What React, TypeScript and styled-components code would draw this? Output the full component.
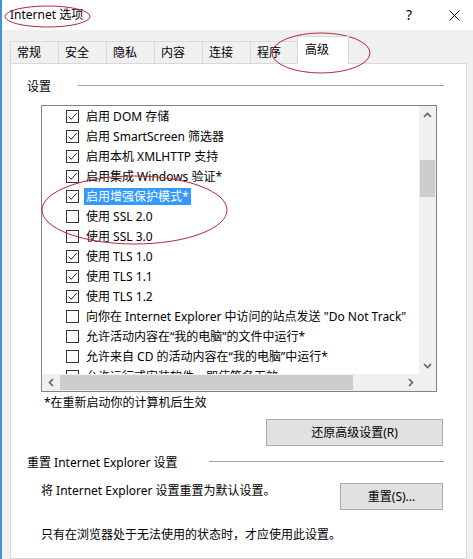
import React from 'react';
import styled, { createGlobalStyle } from 'styled-components';

interface OptionItem {
  label: string;
  checked: boolean;
  selected?: boolean;
}

const options: OptionItem[] = [
  { label: '启用 DOM 存储', checked: true },
  { label: '启用 SmartScreen 筛选器', checked: true },
  { label: '启用本机 XMLHTTP 支持', checked: true },
  { label: '启用集成 Windows 验证*', checked: true },
  { label: '启用增强保护模式*', checked: true, selected: true },
  { label: '使用 SSL 2.0', checked: false },
  { label: '使用 SSL 3.0', checked: false },
  { label: '使用 TLS 1.0', checked: true },
  { label: '使用 TLS 1.1', checked: true },
  { label: '使用 TLS 1.2', checked: true },
  { label: '向你在 Internet Explorer 中访问的站点发送 "Do Not Track"', checked: false },
  { label: '允许活动内容在“我的电脑”的文件中运行*', checked: false },
  { label: '允许来自 CD 的活动内容在“我的电脑”中运行*', checked: false },
  { label: '允许运行或安装软件，即使签名无效', checked: false },
];

const tabs = ['常规', '安全', '隐私', '内容', '连接', '程序', '高级'];

const GlobalStyle = createGlobalStyle`
  html, body {
    margin: 0;
    padding: 0;
    background: #ffffff;
  }
  body {
    font-family: "Noto Sans", "Noto Sans CJK SC", sans-serif;
    font-size: 12px;
    color: #000000;
  }
  * {
    box-sizing: border-box;
  }
`;

const App: React.FC = () => {
  return (
    <>
      <GlobalStyle />
      <Window>
        <TitleBar>
          <Title>Internet 选项</Title>
          <TitleButton $width={52}>
            <HelpGlyph>?</HelpGlyph>
          </TitleButton>
          <TitleButton $width={38}>
            <svg width="11" height="11" viewBox="0 0 11 11">
              <path d="M0.5 0.5 L10.5 10.5 M10.5 0.5 L0.5 10.5" stroke="#000" strokeWidth="1" fill="none" />
            </svg>
          </TitleButton>
        </TitleBar>

        <TabStrip>
          {tabs.map(tab => (
            <Tab key={tab} $active={tab === '高级'}>
              {tab}
            </Tab>
          ))}
        </TabStrip>

        <Panel>
          <GroupHeader>
            <GroupLabel>设置</GroupLabel>
            <GroupLine $offset={27} />
          </GroupHeader>

          <ListBox>
            <ListViewport>
              {options.map(opt => (
                <OptionRow key={opt.label}>
                  <CheckBox>
                    {opt.checked && (
                      <svg width="11" height="11" viewBox="0 0 11 11">
                        <path d="M1.5 5.5 L4.2 8.3 L9.6 2.2" stroke="#222" strokeWidth="1" fill="none" />
                      </svg>
                    )}
                  </CheckBox>
                  <OptionLabel $selected={opt.selected}>{opt.label}</OptionLabel>
                </OptionRow>
              ))}
            </ListViewport>

            <VScroll>
              <ArrowCell>
                <svg width="9" height="6" viewBox="0 0 9 6">
                  <path d="M1 5 L4.5 1.5 L8 5" stroke="#606060" strokeWidth="1.6" fill="none" />
                </svg>
              </ArrowCell>
              <Track>
                <VThumb />
              </Track>
              <ArrowCell>
                <svg width="9" height="6" viewBox="0 0 9 6">
                  <path d="M1 1 L4.5 4.5 L8 1" stroke="#606060" strokeWidth="1.6" fill="none" />
                </svg>
              </ArrowCell>
            </VScroll>

            <HScroll>
              <ArrowCell>
                <svg width="6" height="9" viewBox="0 0 6 9">
                  <path d="M5 1 L1.5 4.5 L5 8" stroke="#606060" strokeWidth="1.6" fill="none" />
                </svg>
              </ArrowCell>
              <Track>
                <HThumb />
              </Track>
              <ArrowCell>
                <svg width="6" height="9" viewBox="0 0 6 9">
                  <path d="M1 1 L4.5 4.5 L1 8" stroke="#606060" strokeWidth="1.6" fill="none" />
                </svg>
              </ArrowCell>
            </HScroll>

            <Corner />
          </ListBox>

          <Note>*在重新启动你的计算机后生效</Note>

          <RestoreButton>还原高级设置(R)</RestoreButton>

          <GroupHeader $top={9}>
            <GroupLabel>重置 Internet Explorer 设置</GroupLabel>
            <GroupLine $offset={31} />
          </GroupHeader>

          <ResetRow>
            <BodyText>将 Internet Explorer 设置重置为默认设置。</BodyText>
            <ResetButton>重置(S)...</ResetButton>
          </ResetRow>

          <Hint>只有在浏览器处于无法使用的状态时，才应使用此设置。</Hint>
        </Panel>

        <Annotations width="473" height="559" viewBox="0 0 473 559">
          <ellipse cx="47.5" cy="16.5" rx="42.5" ry="10.5" />
          <ellipse cx="321" cy="53" rx="49" ry="20" />
          <ellipse cx="134.5" cy="210" rx="92.5" ry="34" />
        </Annotations>
      </Window>
    </>
  );
};

const Window = styled.div`
  position: relative;
  width: 473px;
  height: 559px;
  overflow: hidden;
  background: #f0f0f0;
  border-left: 2px solid #3d95d6;
  display: flex;
  flex-direction: column;
`;

const TitleBar = styled.div`
  flex: none;
  height: 30px;
  background: #ffffff;
  display: flex;
  align-items: center;
  padding-left: 8px;
`;

const Title = styled.span`
  flex: 1;
  line-height: 16px;
`;

const TitleButton = styled.div<{ $width: number }>`
  width: ${p => p.$width}px;
  height: 30px;
  display: flex;
  align-items: center;
  justify-content: center;
`;

const HelpGlyph = styled.span`
  font-size: 14px;
  line-height: 16px;
`;

const TabStrip = styled.div`
  flex: none;
  display: flex;
  align-items: flex-end;
  height: 27px;
  margin: 6px 0 0 8px;
`;

const Tab = styled.div<{ $active?: boolean }>`
  position: relative;
  height: ${p => (p.$active ? 28 : 22)}px;
  width: ${p => (p.$active ? 52 : 48)}px;
  margin: ${p => (p.$active ? '0 0 -1px -1px' : '0')};
  padding-left: ${p => (p.$active ? 7 : 6)}px;
  line-height: ${p => (p.$active ? 26 : 21)}px;
  background: ${p => (p.$active ? '#ffffff' : '#f0f0f0')};
  border-top: 1px solid #d9d9d9;
  border-left: 1px solid #d9d9d9;
  border-right: ${p => (p.$active ? '1px solid #d9d9d9' : 'none')};
  z-index: ${p => (p.$active ? 1 : 0)};
`;

const Panel = styled.div`
  flex: 1;
  width: 457px;
  margin-left: 8px;
  background: #ffffff;
  border: 1px solid #d9d9d9;
  display: flex;
  flex-direction: column;
`;

const GroupHeader = styled.div<{ $top?: number }>`
  display: flex;
  align-items: center;
  margin: ${p => p.$top ?? 15}px 22px 0 16px;
  height: 16px;
`;

const GroupLabel = styled.span`
  line-height: 16px;
  white-space: nowrap;
`;

const GroupLine = styled.div<{ $offset: number }>`
  flex: 1;
  height: 1px;
  margin: 0 0 3px ${p => p.$offset}px;
  background: #a0a0a0;
`;

const ListBox = styled.div`
  margin: 10px 0 0 30px;
  width: 396px;
  height: 287px;
  border: 1px solid #828282;
  display: grid;
  grid-template-columns: 1fr 17px;
  grid-template-rows: 1fr 17px;
  overflow: hidden;
`;

const ListViewport = styled.div`
  overflow: hidden;
  padding-left: 24px;
  display: flex;
  flex-direction: column;
`;

const OptionRow = styled.div`
  flex: none;
  height: 20px;
  display: flex;
  align-items: center;
  white-space: nowrap;
`;

const CheckBox = styled.div`
  flex: none;
  width: 13px;
  height: 13px;
  border: 1px solid #333333;
  background: #ffffff;
  display: flex;
  align-items: center;
  justify-content: center;
`;

const OptionLabel = styled.span<{ $selected?: boolean }>`
  margin-left: 5px;
  padding: 0 2px;
  line-height: 17px;
  background: ${p => (p.$selected ? '#3399ff' : 'transparent')};
  color: ${p => (p.$selected ? '#ffffff' : '#000000')};
`;

const VScroll = styled.div`
  background: #f0f0f0;
  display: flex;
  flex-direction: column;
`;

const HScroll = styled.div`
  background: #f0f0f0;
  display: flex;
`;

const Corner = styled.div`
  background: #f0f0f0;
`;

const ArrowCell = styled.div`
  flex: none;
  width: 17px;
  height: 17px;
  display: flex;
  align-items: center;
  justify-content: center;
`;

const Track = styled.div`
  flex: 1;
  display: flex;
  flex-direction: inherit;
`;

const VThumb = styled.div`
  width: 15px;
  height: 37px;
  margin: 37px 0 0 1px;
  background: #cdcdcd;
`;

const HThumb = styled.div`
  width: 293px;
  height: 15px;
  margin: 1px 0 0 1px;
  background: #cdcdcd;
`;

const Note = styled.div`
  margin: 3px 0 0 33px;
  line-height: 16px;
`;

const PushButton = styled.div`
  flex: none;
  height: 27px;
  background: #e1e1e1;
  border: 1px solid #adadad;
  display: flex;
  align-items: center;
  justify-content: center;
  line-height: 16px;
`;

const RestoreButton = styled(PushButton)`
  width: 177px;
  align-self: flex-end;
  margin: 8px 23px 0 0;
`;

const ResetRow = styled.div`
  display: flex;
  justify-content: space-between;
  align-items: flex-start;
  margin-top: 12px;
  padding: 0 23px 0 30px;
`;

const BodyText = styled.span`
  line-height: 16px;
  white-space: nowrap;
`;

const ResetButton = styled(PushButton)`
  width: 103px;
`;

const Hint = styled.div`
  margin: 17px 0 0 30px;
  line-height: 16px;
  white-space: nowrap;
`;

const Annotations = styled.svg`
  position: absolute;
  top: 0;
  left: -2px;
  pointer-events: none;

  ellipse {
    fill: none;
    stroke: #b3283c;
    stroke-width: 1;
  }
`;

export default App;
